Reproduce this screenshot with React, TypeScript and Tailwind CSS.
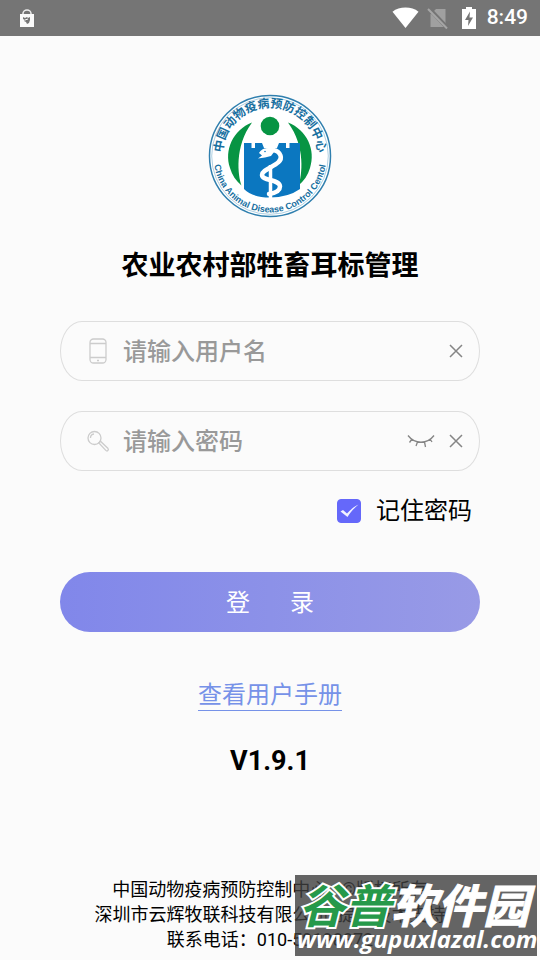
import { useState } from "react";

function StatusBar() {
  return (
    <header className="flex h-9 items-center bg-[#757575] pl-5 pr-3 text-white">
      <svg width="14" height="18" viewBox="0 0 14 18" aria-hidden="true">
        <path d="M3 6V4.500a4 3.500 0 0 1 8 0V6" fill="none" stroke="#ededed" strokeWidth="1.500" />
        <rect x="0" y="5" width="14" height="13" fill="#fafafa" />
        <path d="M3 8l2 1 2-1 1 1 2-1v3l-1 3-2 1-1-2-2-1 1-1-2-1z" fill="#757575" />
        <path d="M5 11l3-1" stroke="#fafafa" strokeWidth="1" />
      </svg>
      <svg className="ml-auto" width="27" height="22" viewBox="0 0 27 22" aria-hidden="true">
        <path d="M13.500 21L.5 4.800C4 1.900 8.500.6 13.500.6S23 1.900 26.500 4.800z" fill="#fff" />
      </svg>
      <svg className="ml-2" width="22" height="22" viewBox="0 0 22 22" aria-hidden="true">
        <path d="M9 2h9.500v18H3.500V7.500z" fill="#a0a0a0" />
        <path d="M2 1.500L20 20.500" stroke="#757575" strokeWidth="4" />
        <path d="M1 2L20 21.500" stroke="#a6a6a6" strokeWidth="2" />
      </svg>
      <svg className="ml-3" width="16" height="22" viewBox="0 0 16 22" aria-hidden="true">
        <path d="M5 0h6v2h4v20H1V2h4z" fill="#fff" />
        <path d="M9 4.500L4 13h3.500L7 19l5-8.500H8.500z" fill="#757575" />
      </svg>
      <span className="ml-2.5 font-[Roboto,sans-serif] text-[21px] font-medium">8:49</span>
    </header>
  );
}

function Emblem() {
  return (
    <svg width="124" height="124" viewBox="0 0 124 124" role="img" aria-label="中国动物疫病预防控制中心">
      <defs>
        <path id="arc-top" d="M15 68A47.500 47.500 0 1 1 109 68" />
        <path id="arc-bottom" d="M5.500 62A56.500 56.500 0 0 0 118.500 62" />
      </defs>
      <circle cx="62" cy="62" r="60.500" fill="#fff" stroke="#2f7fae" strokeWidth="1.500" />
      <circle cx="62" cy="62" r="58.300" fill="none" stroke="#8dbcd5" strokeWidth=".7" />
      <path d="M44 28.500C25 36 16 56 22 74c2 7 6 13 11.500 17.500C30 82 26 53 44 28.500z" fill="#079443" />
      <path d="M80 28.500C99 36 108 56 102 74c-2 7-6 13-11.500 17.500C94 82 98 53 80 28.500z" fill="#079443" />
      <circle cx="62" cy="32" r="9.300" fill="#079443" />
      <path d="M36 49h7.500v5H47v-5h7l2 5h13l2-5h7v5h3.500v-5H92v46q-12 8.500-30 8.500T36 95z" fill="#0b77c0" />
      <path d="M62.500 71v33" stroke="#fff" strokeWidth="3.500" />
      <path d="M56 58c5-3.500 14-3 16.500 3.500C76 71 54 74 54 81c0 6 18 4 18 11.500 0 4.500-5 6.500-11 7.500" fill="none" stroke="#fff" strokeWidth="4.500" strokeLinecap="round" />
      <path d="M51 59c3-6 11-6.500 15-1l-3 4-6 1.500-7 1 4-3z" fill="#fff" />
      <circle cx="57" cy="57.500" r=".8" fill="#0b77c0" />
      <text className="font-['Noto_Sans_CJK_SC',sans-serif] text-[12px] font-bold" fill="#176f9f">
        <textPath href="#arc-top" startOffset="50%" textAnchor="middle">中国动物疫病预防控制中心</textPath>
      </text>
      <text className="font-['Liberation_Sans',sans-serif] text-[9px] font-bold" fill="#176f9f">
        <textPath href="#arc-bottom" startOffset="50%" textAnchor="middle">China Animal Disease Control Centol</textPath>
      </text>
    </svg>
  );
}

function ClearButton({ label, onClick }: { label: string; onClick: () => void }) {
  return (
    <button type="button" aria-label={label} onClick={onClick} className="shrink-0">
      <svg width="14" height="14" viewBox="0 0 14 14" fill="none" stroke="#858585" strokeWidth="1.500">
        <path d="M1 1l12 12M13 1L1 13" />
      </svg>
    </button>
  );
}

const fieldClass =
  "flex h-15 items-center rounded-[22px/30px] border border-[#dedede] pl-6 pr-4";
const inputClass =
  "ml-3 min-w-0 flex-1 bg-transparent pt-0.5 text-2xl font-medium text-[#555] outline-none placeholder:text-[#999]";

export default function App() {
  const [user, setUser] = useState("");
  const [password, setPassword] = useState("");
  const [visible, setVisible] = useState(false);
  const [remember, setRemember] = useState(true);

  return (
    <div className="relative flex min-h-screen flex-col bg-[#fbfbfb] font-[Roboto,'Noto_Sans_CJK_SC',sans-serif] text-black">
      <StatusBar />
      <main className="flex flex-col px-15 pt-[58px]">
        <div className="flex justify-center">
          <Emblem />
        </div>
        <h1 className="mt-[30px] text-center text-[27px] leading-9 font-bold">农业农村部牲畜耳标管理</h1>
        <form className="mt-[37px] flex flex-col" onSubmit={(e) => e.preventDefault()}>
          <div className={fieldClass}>
            <svg className="shrink-0" width="26" height="26" viewBox="0 0 26 26" fill="none" stroke="#cccccc" strokeWidth="1.300" aria-hidden="true">
              <rect x="5" y="1" width="16" height="24" rx="3.500" />
              <path d="M5 5.500h16M5 19.500h16M12 22.500h2" />
            </svg>
            <input className={inputClass} aria-label="用户名" placeholder="请输入用户名" value={user} onChange={(e) => setUser(e.target.value)} />
            <ClearButton label="清除用户名" onClick={() => setUser("")} />
          </div>
          <div className={`${fieldClass} mt-[30px]`}>
            <svg className="shrink-0" width="26" height="26" viewBox="0 0 26 26" fill="none" stroke="#cccccc" strokeWidth="1.300" aria-hidden="true">
              <circle cx="9.500" cy="10" r="6.500" />
              <path d="M5.500 10a4 4 0 0 1 3.500-4M14 15l1.500-1.800 7.300 7c1.500 1.800-.6 3.600-2 2.200L14 15l-1-.2" />
            </svg>
            <input className={inputClass} aria-label="密码" type={visible ? "text" : "password"} placeholder="请输入密码" value={password} onChange={(e) => setPassword(e.target.value)} />
            <span className="flex items-center gap-3.5">
              <button type="button" aria-label="显示密码" aria-pressed={visible} onClick={() => setVisible(!visible)}>
                <svg width="28" height="14" viewBox="0 0 28 14" fill="none" stroke="#858585" strokeWidth="1.300">
                  <path d="M1 1.500c7 9 19 9 26 0M5 5L2.500 8.500M10.500 8L9 12M17.500 8l1 5M23 5l2 3" />
                </svg>
              </button>
              <ClearButton label="清除密码" onClick={() => setPassword("")} />
            </span>
          </div>
          <label className="mt-[22px] mr-2 flex items-center gap-[15px] self-end text-2xl leading-9">
            <span className="grid size-6">
              <input
                type="checkbox"
                checked={remember}
                onChange={(e) => setRemember(e.target.checked)}
                className="peer col-start-1 row-start-1 size-6 appearance-none rounded border border-[#6568fa] checked:bg-[#6568fa]"
              />
              <svg className="pointer-events-none invisible col-start-1 row-start-1 peer-checked:visible" width="24" height="24" viewBox="0 0 24 24" aria-hidden="true">
                <path d="M3.500 12.500l2.500-1.500 4 3.500C13 11 16.500 8 21.500 5.500c-4.500 3.800-8 7.500-11 12.500z" fill="#f2f2ff" />
              </svg>
            </span>
            记住密码
          </label>
          <button
            type="submit"
            className="mt-[43px] flex h-15 items-center justify-center gap-10 rounded-full bg-linear-to-r from-[#8187ea] via-[#8c91e8] to-[#989ae6] pt-0.5 text-2xl text-white"
          >
            <span>登</span>
            <span>录</span>
          </button>
        </form>
        <a href="#manual" className="mt-[49px] self-center border-b border-[#7692e8] text-2xl leading-[29px] text-[#7692e8]">
          查看用户手册
        </a>
        <p className="mt-8 text-center text-[27px] leading-9 font-bold">V1.9.1</p>
      </main>
      <footer className="mt-auto pt-6 pb-2 text-center text-lg leading-[25px] whitespace-pre">
        <p>中国动物疫病预防控制中心{"   "}©版权所有</p>
        <p>深圳市云辉牧联科技有限公司{"  "}提供技术支持</p>
        <p>联系电话：010-59198872</p>
      </footer>
      <aside className="absolute right-[3px] bottom-1 flex h-[81px] w-[242px] flex-col overflow-hidden bg-[#3f3f3f]/80 pt-1 whitespace-nowrap text-white">
        <p className="pl-1 font-['Noto_Sans_CJK_SC',sans-serif] text-[46px] leading-[48px] font-bold italic">
          <span className="text-[#26994a] [-webkit-text-stroke:4px_white] [paint-order:stroke_fill]">谷普</span>
          <span className="[-webkit-text-stroke:1px_white]">软件园</span>
        </p>
        <p className="pl-0.5 font-['Open_Sans',sans-serif] text-2xl leading-6 font-bold italic">www.gupuxlazal.com</p>
      </aside>
    </div>
  );
}
